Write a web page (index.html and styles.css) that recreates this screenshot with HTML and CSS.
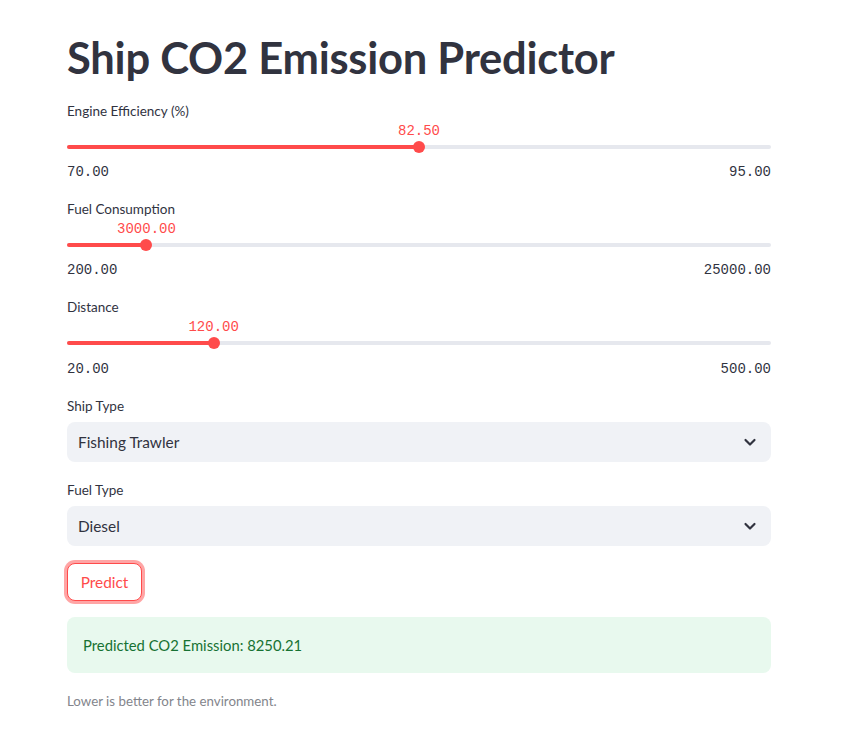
FILE: index.html
```html
<!DOCTYPE html>
<html>
<head>
<meta charset="utf-8">
<link rel="stylesheet" href="styles.css">
</head>
<body>
<main class="container">
  <h1 class="title">Ship CO2 Emission Predictor</h1>

  <div class="field">
    <div class="label">Engine Efficiency (%)</div>
    <div class="track-wrap">
      <div class="track"><div class="fill" style="width:50%"></div></div>
      <div class="thumb" style="left:50%"><span class="value">82.50</span></div>
    </div>
    <div class="ticks"><span>70.00</span><span>95.00</span></div>
  </div>

  <div class="field">
    <div class="label">Fuel Consumption</div>
    <div class="track-wrap">
      <div class="track"><div class="fill" style="width:11.29%"></div></div>
      <div class="thumb" style="left:11.29%"><span class="value">3000.00</span></div>
    </div>
    <div class="ticks"><span>200.00</span><span>25000.00</span></div>
  </div>

  <div class="field field-last">
    <div class="label">Distance</div>
    <div class="track-wrap">
      <div class="track"><div class="fill" style="width:20.83%"></div></div>
      <div class="thumb" style="left:20.83%"><span class="value">120.00</span></div>
    </div>
    <div class="ticks"><span>20.00</span><span>500.00</span></div>
  </div>

  <div class="select-field">
    <div class="label">Ship Type</div>
    <div class="select">
      <span>Fishing Trawler</span>
      <svg class="chev" width="14" height="14" viewBox="0 0 14 14"><polyline points="2.5,5 7,9.5 11.5,5" fill="none" stroke="#31333f" stroke-width="2.2" stroke-linecap="round" stroke-linejoin="round"/></svg>
    </div>
  </div>

  <div class="select-field">
    <div class="label">Fuel Type</div>
    <div class="select">
      <span>Diesel</span>
      <svg class="chev" width="14" height="14" viewBox="0 0 14 14"><polyline points="2.5,5 7,9.5 11.5,5" fill="none" stroke="#31333f" stroke-width="2.2" stroke-linecap="round" stroke-linejoin="round"/></svg>
    </div>
  </div>

  <div class="btn-row"><button class="btn">Predict</button></div>

  <div class="success">Predicted CO2 Emission: 8250.21</div>

  <p class="caption">Lower is better for the environment.</p>
</main>
</body>
</html>
```

FILE: styles.css
```css
* { box-sizing: border-box; }
html, body { margin: 0; padding: 0; background: #ffffff; }
body {
  font-family: "Lato", "Noto Sans", sans-serif;
  color: #31333f;
}
.container {
  width: 704px;
  margin-left: 67px;
  padding-top: 29px;
  display: flex;
  flex-direction: column;
}
.title {
  margin: 0;
  font-size: 43.5px;
  font-weight: 700;
  line-height: 56px;
  letter-spacing: -0.25px;
  height: 72px;
}
.label {
  font-size: 13.5px;
  line-height: 20px;
  height: 20px;
}
.field {
  margin-bottom: 18px;
}
.field-last .ticks {
  margin-top: 15px;
}
.track-wrap {
  position: relative;
  margin-top: 24px;
  height: 4px;
}
.track {
  height: 4px;
  border-radius: 2px;
  background: #e6e8ee;
  overflow: hidden;
}
.fill {
  height: 100%;
  background: #ff4b4b;
}
.thumb {
  position: absolute;
  top: 50%;
  width: 12px;
  height: 12px;
  border-radius: 50%;
  background: #ff4b4b;
  transform: translate(-50%, -50%);
}
.value {
  position: absolute;
  bottom: calc(100% + 1px);
  left: 50%;
  transform: translateX(-50%);
  font-family: "Liberation Mono", "DejaVu Sans Mono", monospace;
  font-size: 14px;
  line-height: 18px;
  color: #ff4b4b;
  white-space: nowrap;
}
.ticks {
  margin-top: 14px;
  display: flex;
  justify-content: space-between;
  font-family: "Liberation Mono", "DejaVu Sans Mono", monospace;
  font-size: 14px;
  line-height: 18px;
  color: #31333f;
}
.select-field {
  margin-bottom: 18px;
}
.select {
  margin-top: 6px;
  height: 40px;
  border-radius: 8px;
  background: #f0f2f6;
  display: flex;
  align-items: center;
  justify-content: space-between;
  padding: 0 14px 0 11px;
  font-size: 15.4px;
}
.chev { display: block; }
.btn-row {
  margin-top: -1px;
  display: flex;
}
.btn {
  height: 38px;
  width: 75px;
  padding: 0;
  border: 1px solid #ff4b4b;
  border-radius: 8px;
  background: #ffffff;
  color: #ff4b4b;
  font-family: inherit;
  font-size: 15.4px;
  box-shadow: 0 0 0 3px rgba(255, 75, 75, 0.5);
}
.success {
  margin-top: 16px;
  height: 56px;
  border-radius: 8px;
  background: #e8f9ee;
  color: #177233;
  font-size: 14.8px;
  display: flex;
  align-items: center;
  padding: 0 16px;
}
.caption {
  margin: 18px 0 0;
  font-size: 13.3px;
  line-height: 20px;
  color: #83858c;
}
```
